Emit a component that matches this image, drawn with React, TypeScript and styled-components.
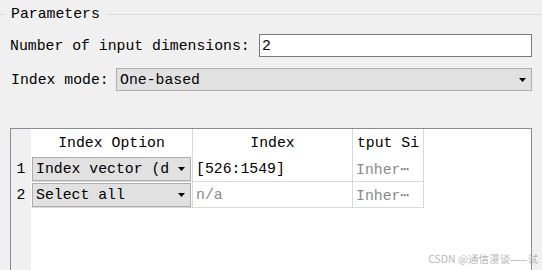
import React from 'react'
import styled, { createGlobalStyle } from 'styled-components'

const GlobalStyle = createGlobalStyle`
  html, body {
    margin: 0;
    padding: 0;
    background: #f0f0f0;
    overflow: hidden;
  }
  body {
    font-family: 'Liberation Mono', 'DejaVu Sans Mono', monospace;
    font-size: 14.8px;
    color: #000;
  }
`

const Page = styled.div`
  position: relative;
  width: 542px;
  height: 270px;
  overflow: hidden;
  padding-top: 6px;
  box-sizing: border-box;
`

const Legend = styled.div`
  display: flex;
  align-items: center;
  height: 16px;
`

const LegendLine = styled.div<{ $grow?: boolean }>`
  height: 1px;
  background: #dcdcdc;
  ${({ $grow }) => ($grow ? 'flex: 1;' : 'width: 6px;')}
`

const LegendText = styled.span`
  margin: 0 6px 0 5px;
  line-height: 16px;
`

const Form = styled.div`
  display: flex;
  flex-direction: column;
  gap: 11px;
  margin-top: 12px;
  padding: 0 10px;
`

const FieldRow = styled.div`
  display: flex;
  align-items: center;
  height: 23px;
`

const Label = styled.span<{ $width: number; $indent?: number }>`
  width: ${({ $width }) => $width}px;
  padding-left: ${({ $indent }) => $indent || 0}px;
  box-sizing: border-box;
  white-space: nowrap;
  flex-shrink: 0;
`

const TextBox = styled.div`
  flex: 1;
  height: 23px;
  box-sizing: border-box;
  border: 1px solid #7a7a7a;
  background: #fff;
  display: flex;
  align-items: center;
  padding-left: 2px;
`

const Dropdown = styled.div<{ $grow?: boolean }>`
  ${({ $grow }) => ($grow ? 'flex: 1;' : 'width: 100%;')}
  height: 100%;
  box-sizing: border-box;
  border: 1px solid #adadad;
  background: #e1e1e1;
  display: flex;
  align-items: center;
  padding: 0 5px 0 3px;
  gap: 4px;
`

const DropdownText = styled.span`
  flex: 1;
  white-space: nowrap;
`

const Arrow = () => (
  <svg width="7" height="4" viewBox="0 0 7 4">
    <polygon points="0,0 7,0 3.5,4" fill="#000" />
  </svg>
)

const Frame = styled.div`
  margin: 37px 10px 0;
  height: 160px;
  border: 1px solid #8a8a98;
  display: flex;
`

const Gutter = styled.div`
  width: 20px;
  background: #f0f0f0;
  display: flex;
  flex-direction: column;
`

const GutterCell = styled.div<{ $h: number }>`
  height: ${({ $h }) => $h}px;
  display: flex;
  align-items: center;
  justify-content: center;
`

const Body = styled.div`
  flex: 1;
  background: #fff;
  align-self: stretch;
`

const Grid = styled.div`
  display: grid;
  grid-template-columns: 162px 160px 71px;
  grid-template-rows: 27px 26px 26px;
`

const HeadCell = styled.div`
  border-right: 1px solid #d9d9d9;
  display: flex;
  align-items: center;
  justify-content: center;
  white-space: nowrap;
`

const Cell = styled.div<{ $muted?: boolean; $pad?: number }>`
  border-right: 1px solid #d9d9d9;
  border-bottom: 1px solid #d9d9d9;
  display: flex;
  align-items: center;
  padding: ${({ $pad }) => ($pad === undefined ? '0 3px' : `${$pad}px ${$pad}px 0`)};
  color: ${({ $muted }) => ($muted ? '#8a8a8a' : '#000')};
  white-space: nowrap;
  box-sizing: border-box;
  min-width: 0;
`

const Watermark = styled.div`
  position: absolute;
  right: 4px;
  bottom: 4px;
  font-family: 'Noto Sans CJK SC', 'Noto Sans', sans-serif;
  font-size: 10.5px;
  color: #b8b8b8;
  white-space: nowrap;
`

const rows = [
  { option: 'Index vector (d', index: '[526:1549]', muted: false },
  { option: 'Select all', index: 'n/a', muted: true },
]

export default function App() {
  return (
    <Page>
      <GlobalStyle />
      <Legend>
        <LegendLine />
        <LegendText>Parameters</LegendText>
        <LegendLine $grow />
      </Legend>
      <Form>
        <FieldRow>
          <Label $width={249}>Number of input dimensions:</Label>
          <TextBox>2</TextBox>
        </FieldRow>
        <FieldRow>
          <Label $width={106} $indent={1}>Index mode:</Label>
          <Dropdown $grow>
            <DropdownText>One-based</DropdownText>
            <Arrow />
          </Dropdown>
        </FieldRow>
      </Form>
      <Frame>
        <Gutter>
          <GutterCell $h={27} />
          {rows.map((_, i) => (
            <GutterCell key={i} $h={26}>{i + 1}</GutterCell>
          ))}
        </Gutter>
        <Body>
          <Grid>
            <HeadCell>Index Option</HeadCell>
            <HeadCell>Index</HeadCell>
            <HeadCell>tput Si</HeadCell>
            {rows.map((r, i) => (
              <React.Fragment key={i}>
                <Cell $pad={1}>
                  <Dropdown>
                    <DropdownText>{r.option}</DropdownText>
                    <Arrow />
                  </Dropdown>
                </Cell>
                <Cell $muted={r.muted}>{r.index}</Cell>
                <Cell $muted>Inher⋯</Cell>
              </React.Fragment>
            ))}
          </Grid>
        </Body>
      </Frame>
      <Watermark>CSDN @通信漫谈——试</Watermark>
    </Page>
  )
}
